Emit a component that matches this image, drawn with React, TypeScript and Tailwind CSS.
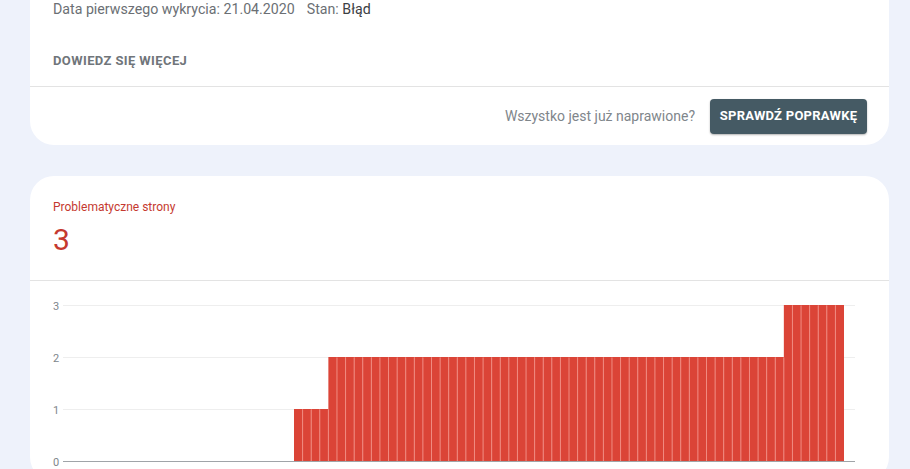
import React from "react";

const values: number[] = [
  ...Array(4).fill(1),
  ...Array(53).fill(2),
  ...Array(7).fill(3),
];

function PagesChart() {
  const x0 = 33;
  const x1 = 825;
  const barStart = 264;
  const pitch = 550 / values.length;
  const yFor = (v: number) => 180.5 - v * 52;
  return (
    <svg width="859" height="200" viewBox="0 0 859 200" className="block">
      {[3, 2, 1].map((v) => (
        <line key={v} x1={x0} x2={x1} y1={yFor(v)} y2={yFor(v)} stroke="#eeeeee" strokeWidth="1" />
      ))}
      {values.map((v, i) => (
        <rect
          key={i}
          x={barStart + i * pitch}
          y={yFor(v) - 0.5}
          width={pitch}
          height={v * 52 + 0.5}
          fill="#db4437"
        />
      ))}
      {values.map((v, i) =>
        i > 0 ? (
          <line
            key={"s" + i}
            x1={barStart + i * pitch}
            x2={barStart + i * pitch}
            y1={yFor(Math.min(v, values[i - 1]))}
            y2={180.5}
            stroke="#f08a80"
            strokeWidth="1"
          />
        ) : null
      )}
      <line x1={x0} x2={x1} y1={180.5} y2={180.5} stroke="#a0a4a8" strokeWidth="1" />
      {[3, 2, 1, 0].map((v) => (
        <text
          key={v}
          x={26}
          y={yFor(v) + 4}
          textAnchor="middle"
          fontSize="11"
          fill="#80868b"
          fontFamily="Roboto, sans-serif"
        >
          {v}
        </text>
      ))}
    </svg>
  );
}

export default function App() {
  return (
    <div className="h-[469px] w-[910px] overflow-hidden bg-[#eef2fb] font-['Roboto',sans-serif]">
      <div className="ml-[30px] w-[859px] -mt-[40px]">
        <section className="rounded-[24px] bg-white">
          <div className="px-[23px] pt-[40px] pb-[17px]">
            <div className="flex h-[20px] items-center gap-[12px] text-[14.2px] text-[#6b6f74]">
              <span>Data pierwszego wykrycia: 21.04.2020</span>
              <span>
                Stan: <span className="text-[#3c4043]">Błąd</span>
              </span>
            </div>
            <div className="mt-[33px] flex h-[16px] items-center text-[13px] font-bold uppercase tracking-[0.03em] text-[#70757a]">
              Dowiedz się więcej
            </div>
          </div>
          <div className="flex h-[59px] items-center justify-end gap-[15px] border-t border-[#e3e3e3] pr-[22px]">
            <span className="text-[14px] text-[#80868b]">Wszystko jest już naprawione?</span>
            <button className="h-[35px] w-[157px] rounded-[4px] bg-[#455a64] text-[13px] font-bold tracking-[0.02em] text-white shadow-[0_1px_2px_rgba(0,0,0,0.3)]">
              SPRAWDŹ POPRAWKĘ
            </button>
          </div>
        </section>

        <section className="mt-[31px] rounded-[24px] bg-white">
          <div className="px-[23px] pt-[23px] pb-[22px]">
            <div className="flex h-[16px] items-center text-[12px] text-[#c5392f]">Problematyczne strony</div>
            <div className="mt-[7px] flex h-[36px] items-center text-[30px] leading-none text-[#c5392f]">3</div>
          </div>
          <div className="border-t border-[#e3e3e3]">
            <PagesChart />
          </div>
        </section>
      </div>
    </div>
  );
}
